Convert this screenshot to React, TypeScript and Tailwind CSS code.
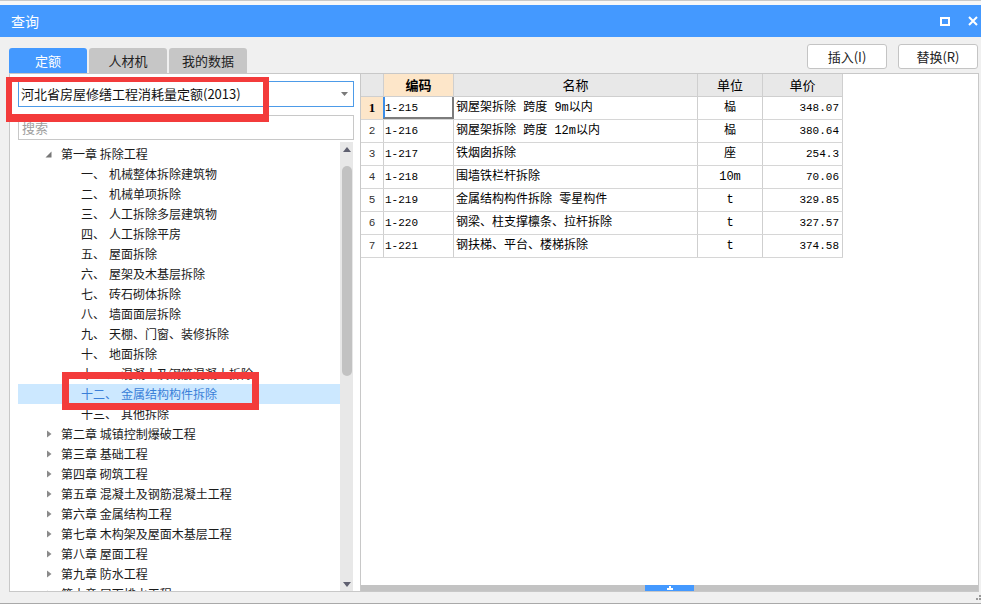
const sections = [
  '机械整体拆除建筑物',
  '机械单项拆除',
  '人工拆除多层建筑物',
  '人工拆除平房',
  '屋面拆除',
  '屋架及木基层拆除',
  '砖石砌体拆除',
  '墙面面层拆除',
  '天棚、门窗、装修拆除',
  '地面拆除',
  '混凝土及钢筋混凝土拆除',
  '金属结构构件拆除',
  '其他拆除',
];
const nums = ['一、', '二、', '三、', '四、', '五、', '六、', '七、', '八、', '九、', '十、', '十一、', '十二、', '十三、'];

const chapters = [
  '第二章 城镇控制爆破工程',
  '第三章 基础工程',
  '第四章 砌筑工程',
  '第五章 混凝土及钢筋混凝土工程',
  '第六章 金属结构工程',
  '第七章 木构架及屋面木基层工程',
  '第八章 屋面工程',
  '第九章 防水工程',
  '第十章 屋面排水工程',
];

const rows = [
  { code: '1-215', name: '钢屋架拆除 跨度 9m以内', unit: '榀', price: '348.07' },
  { code: '1-216', name: '钢屋架拆除 跨度 12m以内', unit: '榀', price: '380.64' },
  { code: '1-217', name: '铁烟囱拆除', unit: '座', price: '254.3' },
  { code: '1-218', name: '围墙铁栏杆拆除', unit: '10m', price: '70.06' },
  { code: '1-219', name: '金属结构构件拆除 零星构件', unit: 't', price: '329.85' },
  { code: '1-220', name: '钢梁、柱支撑檩条、拉杆拆除', unit: 't', price: '327.57' },
  { code: '1-221', name: '钢扶梯、平台、楼梯拆除', unit: 't', price: '374.58' },
];

function Collapsed() {
  return (
    <svg width="6" height="8" viewBox="0 0 6 8">
      <path d="M1 0.5 L5.5 4 L1 7.5 Z" fill="#8a8a8a" />
    </svg>
  );
}

function Expanded() {
  return (
    <svg width="7" height="7" viewBox="0 0 7 7">
      <path d="M6.5 0.5 L6.5 6.5 L0.5 6.5 Z" fill="#777" />
    </svg>
  );
}

export default function App() {
  return (
    <div className="relative h-[607px] w-[981px] overflow-hidden bg-[#f0f0f0] font-['Noto_Sans_CJK_SC','Noto_Sans',sans-serif] text-[12px] text-[#1a1a1a]">
      <div className="h-[5px] border-t border-[#c9c9c9] bg-[#f7f7f7]" />
      {/* title bar */}
      <div className="flex h-[32px] items-center justify-between bg-[#4499ff] pl-[11px] pr-[3px] text-white">
        <span className="text-[14px]">查询</span>
        <div className="flex items-center gap-[18px]">
          <svg width="10" height="9" viewBox="0 0 10 9">
            <rect x="1" y="1" width="8" height="7" fill="none" stroke="#fff" strokeWidth="2" />
          </svg>
          <svg width="10" height="10" viewBox="0 0 10 10">
            <path d="M1 1 L9 9 M9 1 L1 9" stroke="#fff" strokeWidth="2" />
          </svg>
        </div>
      </div>

      {/* tabs + buttons */}
      <div className="flex h-[36px] items-end justify-between pl-[9px] pr-[3px]">
        <div className="flex gap-[2px] text-[13px]">
          <div className="flex h-[25px] w-[78px] items-center justify-center rounded-t-[3px] bg-[#4499ff] text-white">定额</div>
          <div className="flex h-[25px] w-[78px] items-center justify-center rounded-t-[3px] bg-[#c6c6c6] text-[#222]">人材机</div>
          <div className="flex h-[25px] w-[78px] items-center justify-center rounded-t-[3px] bg-[#c6c6c6] text-[#222]">我的数据</div>
        </div>
        <div className="mb-[4px] flex gap-[11px] text-[13px]">
          <button className="h-[25px] w-[80px] rounded-[3px] border border-[#c4c4c4] bg-white text-[#222]">插入(I)</button>
          <button className="h-[25px] w-[80px] rounded-[3px] border border-[#c4c4c4] bg-white text-[#222]">替换(R)</button>
        </div>
      </div>

      {/* main */}
      <div className="ml-[9px] flex h-[519px]">
        {/* left panel */}
        <div className="flex w-[351px] flex-col border-y border-l border-[#c8c8c8] bg-white">
          <div className="ml-[8px] mt-[7px] flex h-[26px] w-[336px] items-center justify-between border border-[#4d9be8] pl-[2px] pr-[5px] text-[13px] text-[#111]">
            <span>河北省房屋修缮工程消耗量定额(2013)</span>
            <svg width="7" height="4" viewBox="0 0 7 4">
              <path d="M0 0 L7 0 L3.5 4 Z" fill="#7a7a7a" />
            </svg>
          </div>
          <div className="ml-[8px] mt-[8px] flex h-[25px] w-[336px] items-center border border-[#c8c8c8] pl-[3px] text-[13px] text-[#a0a0a0]">
            搜索
          </div>
          <div className="mt-[2px] flex min-h-0 flex-1">
            <div className="ml-[8px] w-[322px] overflow-hidden pt-[2px]">
              <div className="flex h-[20px] items-center pl-[27px]">
                <span className="flex w-[16px] items-center"><Expanded /></span>
                <span>第一章 拆除工程</span>
              </div>
              {sections.map((s, i) => (
                <div
                  key={s}
                  className={i === 11 ? 'flex h-[20px] items-center bg-[#cce8ff] pl-[63px] text-[#3a7fd8]' : 'flex h-[20px] items-center pl-[63px]'}
                >
                  <span>{nums[i]}</span>
                  <span className="ml-[4px]">{s}</span>
                </div>
              ))}
              {chapters.map((c) => (
                <div key={c} className="flex h-[20px] items-center pl-[28px]">
                  <span className="flex w-[15px] items-center"><Collapsed /></span>
                  <span>{c}</span>
                </div>
              ))}
            </div>
            {/* scrollbar */}
            <div className="relative w-[13px] bg-[#e8e8e8]">
              <svg className="absolute left-[3px] top-[5px]" width="8" height="5" viewBox="0 0 8 5">
                <path d="M0 5 L4 0 L8 5 Z" fill="#5f6070" />
              </svg>
              <div className="absolute left-[2px] top-[24px] h-[210px] w-[10px] rounded-full bg-[#c2c2c2]" />
              <svg className="absolute bottom-[4px] left-[3px]" width="8" height="5" viewBox="0 0 8 5">
                <path d="M0 0 L8 0 L4 5 Z" fill="#5f6070" />
              </svg>
            </div>
          </div>
        </div>

        {/* right panel */}
        <div className="flex w-[619px] flex-col border border-[#c8c8c8] bg-white">
          <div className="flex-1 font-['Liberation_Mono','Noto_Sans_CJK_SC',monospace] text-[12px] text-black">
            <div className="flex h-[23px] w-[482px] border-b border-[#cfcfcf] bg-[#e8e8e8] font-['Noto_Sans_CJK_SC',sans-serif] text-[13px]">
              <div className="w-[23px] border-r border-[#cfcfcf]" />
              <div className="flex w-[70px] items-center justify-center border-r border-[#cfcfcf] bg-[#fde6c9] font-bold">编码</div>
              <div className="flex w-[244px] items-center justify-center border-r border-[#cfcfcf]">名称</div>
              <div className="flex w-[65px] items-center justify-center border-r border-[#cfcfcf]">单位</div>
              <div className="flex w-[80px] items-center justify-center border-r border-[#cfcfcf]">单价</div>
            </div>
            {rows.map((r, i) => (
              <div key={r.code} className="flex h-[23px] w-[482px] border-b border-[#d6d6d6]">
                <div
                  className={
                    i === 0
                      ? "flex w-[23px] items-center justify-center border-r border-[#cfcfcf] bg-[#fde6c9] font-['Liberation_Serif',serif] text-[13px] font-bold"
                      : 'flex w-[23px] items-center justify-center border-r border-[#cfcfcf] text-[11px] text-[#333]'
                  }
                >
                  {i + 1}
                </div>
                <div className="relative flex w-[70px] items-center border-r border-[#cfcfcf] pl-[1px] text-[11px]">
                  {r.code}
                  {i === 0 && (
                    <div className="absolute inset-y-0 -left-px right-[-1px] border-b-2 border-l-2 border-r-2 border-[#7c7c7c] border-l-[#3b8de8]" />
                  )}
                </div>
                <div className="flex w-[244px] items-center border-r border-[#cfcfcf] pl-[2px]">{r.name}</div>
                <div className="flex w-[65px] items-center justify-center border-r border-[#cfcfcf]">{r.unit}</div>
                <div className="flex w-[80px] items-center justify-end border-r border-[#cfcfcf] pr-[3px] text-[11px]">{r.price}</div>
              </div>
            ))}
          </div>
          <div className="flex h-[6px] bg-[#c3c3c3]">
            <div className="ml-[284px] flex w-[49px] items-center justify-center bg-[#4499ff]">
              <svg width="6" height="4" viewBox="0 0 6 4">
                <path d="M2 0 L4 0 L4 2 L6 2 L6 4 L0 4 L0 2 L2 2 Z" fill="#fff" />
              </svg>
            </div>
          </div>
        </div>
      </div>

      <div className="mt-[11px] h-[4px] border-t border-[#a9a9a9] bg-white" />

      {/* resize grip */}
      <div className="absolute bottom-[7px] right-0 flex flex-col items-end gap-[1px]">
        <div className="h-[2px] w-[2px] bg-[#999]" />
        <div className="flex gap-[1px]">
          <div className="h-[2px] w-[2px] bg-[#999]" />
          <div className="h-[2px] w-[2px] bg-[#999]" />
        </div>
      </div>

      {/* annotation boxes */}
      <div className="absolute left-[6px] top-[77px] h-[45px] w-[263px] border-[6px] border-b-[8px] border-t-[5px] border-[#f33b3b]" />
      <div className="absolute left-[62px] top-[372px] h-[38px] w-[197px] border-[7px] border-[#f33b3b]" />
    </div>
  );
}
